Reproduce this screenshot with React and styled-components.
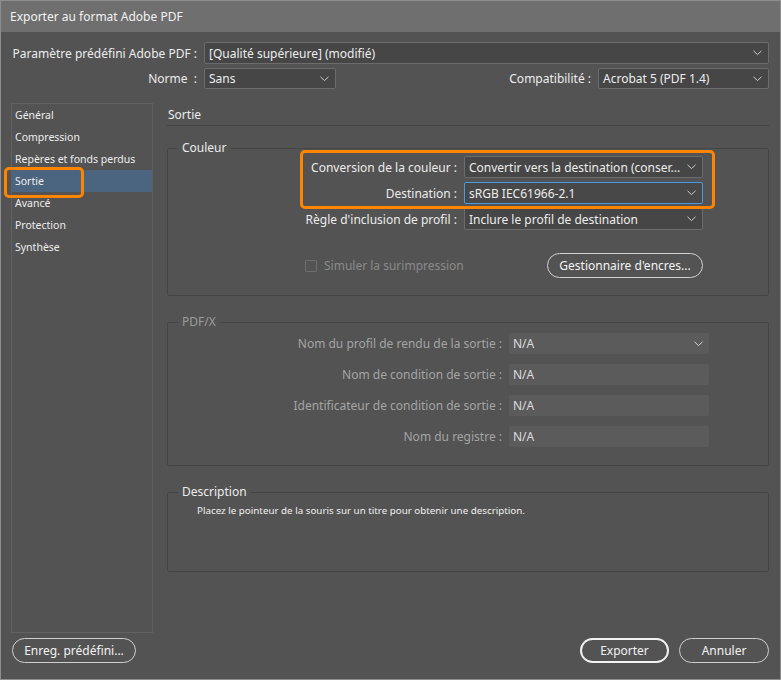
import React from "react";
import styled, { createGlobalStyle } from "styled-components";

const Global = createGlobalStyle`
  * { box-sizing: border-box; }
  html, body { margin: 0; padding: 0; background: #535353; }
  body { font-family: "Noto Sans", "Segoe UI", sans-serif; }
`;

const Window = styled.div`
  position: relative;
  width: 781px;
  height: 680px;
  border: 1px solid #8e8e8e;
  background: #535353;
  display: flex;
  flex-direction: column;
  color: #ececec;
  font-size: 12px;
  overflow: hidden;
`;

const TitleBar = styled.div`
  height: 31px;
  flex: none;
  background: #6f6f6f;
  padding-left: 9px;
  display: flex;
  align-items: center;
  font-size: 12px;
  color: #f2f2f2;
`;

const Body = styled.div`
  flex: 1;
  display: flex;
  flex-direction: column;
  padding: 10px 11px 0 10px;
`;

const Header = styled.div`
  display: flex;
  flex-direction: column;
  gap: 4px;
`;

const HeaderRow = styled.div`
  display: flex;
  align-items: center;
  gap: 7px;
  height: ${(p) => p.$h || 22}px;
`;

const HeaderLabel = styled.div`
  width: ${(p) => (p.$w ? p.$w + "px" : "auto")};
  flex: none;
  text-align: right;
  white-space: nowrap;
  margin-left: ${(p) => (p.$auto ? "auto" : "0")};
`;

const SelectBox = styled.div`
  position: relative;
  height: ${(p) => p.$h || 21}px;
  width: ${(p) => (p.$w ? p.$w + "px" : "auto")};
  flex: ${(p) => (p.$w ? "none" : "1")};
  background: ${(p) => (p.$focus ? "#484848" : "#464646")};
  border: 1px solid ${(p) => (p.$focus ? "#4a9ae6" : "#6c6c6c")};
  border-radius: 2px;
  display: flex;
  align-items: center;
  padding: 0 20px 0 4px;
  color: #ededed;
  white-space: nowrap;
  overflow: hidden;
`;

const Chevron = styled.svg`
  position: absolute;
  right: 6px;
  top: 50%;
  margin-top: -3px;
`;

const ChevronIcon = () => (
  <Chevron width="9" height="6" viewBox="0 0 9 6">
    <polyline points="0.5,0.8 4.5,4.6 8.5,0.8" fill="none" stroke="#cfcfcf" strokeWidth="1" />
  </Chevron>
);

const Select = ({ children, ...rest }) => (
  <SelectBox {...rest}>
    {children}
    <ChevronIcon />
  </SelectBox>
);

const Main = styled.div`
  margin-top: 14px;
  display: flex;
  gap: 14px;
  height: 530px;
`;

const Sidebar = styled.div`
  width: 142px;
  flex: none;
  border: 1px solid #626262;
  border-right-color: #5e5e5e;
  padding-top: 0;
`;

const NavItem = styled.div`
  height: 22px;
  display: flex;
  align-items: center;
  padding-left: 3px;
  font-size: 10.5px;
  color: #ededed;
  background: ${(p) => (p.$active ? "#4b6480" : "transparent")};
`;

const Panel = styled.div`
  flex: 1;
  display: flex;
  flex-direction: column;
`;

const PanelTitle = styled.div`
  height: 23px;
  padding-top: 3px;
  line-height: 18px;
  padding-left: 1px;
  border-bottom: 1px solid #434343;
  font-size: 12px;
`;

const Group = styled.fieldset`
  margin: ${(p) => p.$mt}px 0 0 0;
  padding: ${(p) => p.$pt || 0}px 0 ${(p) => p.$pb || 0}px 0;
  border: 1px solid #454545;
  border-radius: 2px;
  min-width: 0;
  height: ${(p) => (p.$h ? p.$h + "px" : "auto")};
`;

const Legend = styled.legend`
  margin-left: 10px;
  padding: 0 4px;
  line-height: 14px;
  font-size: 12px;
  color: ${(p) => (p.$disabled ? "#9c9c9c" : "#ececec")};
`;

const FormGrid = styled.div`
  display: grid;
  grid-template-columns: ${(p) => p.$label}px ${(p) => p.$field}px;
  column-gap: 7px;
  row-gap: ${(p) => p.$gap}px;
  align-items: center;
`;

const FieldLabel = styled.div`
  text-align: right;
  white-space: nowrap;
  color: ${(p) => (p.$disabled ? "#a4a4a4" : "#ececec")};
`;

const DisabledField = styled.div`
  position: relative;
  height: 21px;
  background: #5b5b5b;
  border-radius: 2px;
  display: flex;
  align-items: center;
  padding-left: 4px;
  color: #dcdcdc;
`;

const OptionsRow = styled.div`
  width: 535px;
  margin-top: 23px;
  height: 25px;
  display: flex;
  align-items: center;
  padding-left: 137px;
`;

const CheckBox = styled.span`
  width: 12px;
  height: 12px;
  border: 1px solid #6e6e6e;
  border-radius: 1px;
  flex: none;
`;

const CheckLabel = styled.span`
  margin-left: 7px;
  color: #8a8a8a;
`;

const PillButton = styled.div`
  height: 25px;
  width: ${(p) => p.$w}px;
  margin-left: ${(p) => (p.$auto ? "auto" : "0")};
  border: ${(p) => (p.$primary ? "2px solid #f2f2f2" : "1px solid #cfcfcf")};
  border-radius: 13px;
  display: flex;
  align-items: center;
  justify-content: center;
  color: #f2f2f2;
  font-size: 12px;
  white-space: nowrap;
  flex: none;
`;

const DescText = styled.div`
  padding-left: 29px;
  padding-top: 5px;
  font-size: 9.8px;
  line-height: 14px;
  color: #f0f0f0;
`;

const Footer = styled.div`
  margin-top: 5px;
  display: flex;
  align-items: center;
  gap: 10px;
  padding-left: 1px;
`;

const Highlight = styled.div`
  position: absolute;
  left: ${(p) => p.$x}px;
  top: ${(p) => p.$y}px;
  width: ${(p) => p.$w}px;
  height: ${(p) => p.$h}px;
  border: 3px solid #ff8500;
  border-radius: 5px;
  pointer-events: none;
`;

const navItems = [
  "Général",
  "Compression",
  "Repères et fonds perdus",
  "Sortie",
  "Avancé",
  "Protection",
  "Synthèse",
];

const pdfxRows = [
  ["Nom du profil de rendu de la sortie :", true],
  ["Nom de condition de sortie :", false],
  ["Identificateur de condition de sortie :", false],
  ["Nom du registre :", false],
];

export default function App() {
  return (
    <>
      <Global />
      <Window>
        <TitleBar>Exporter au format Adobe PDF</TitleBar>
        <Body>
          <Header>
            <HeaderRow>
              <HeaderLabel $w={186}>Paramètre prédéfini Adobe PDF :</HeaderLabel>
              <Select $h={22}>[Qualité supérieure] (modifié)</Select>
            </HeaderRow>
            <HeaderRow $h={21}>
              <HeaderLabel $w={186}>Norme&nbsp; :</HeaderLabel>
              <Select $w={132}>Sans</Select>
              <HeaderLabel $auto>Compatibilité :</HeaderLabel>
              <Select $w={171}>Acrobat 5 (PDF 1.4)</Select>
            </HeaderRow>
          </Header>

          <Main>
            <Sidebar>
              {navItems.map((n) => (
                <NavItem key={n} $active={n === "Sortie"}>
                  {n}
                </NavItem>
              ))}
            </Sidebar>
            <Panel>
              <PanelTitle>Sortie</PanelTitle>

              <Group $mt={15} $pt={1} $pb={17}>
                <Legend>Couleur</Legend>
                <FormGrid $label={289} $field={239} $gap={4}>
                  <FieldLabel>Conversion de la couleur :</FieldLabel>
                  <Select $h={22}>Convertir vers la destination (conser...</Select>
                  <FieldLabel>Destination :</FieldLabel>
                  <Select $h={22} $focus>sRGB IEC61966-2.1</Select>
                  <FieldLabel>Règle d'inclusion de profil :</FieldLabel>
                  <Select $h={22}>Inclure le profil de destination</Select>
                </FormGrid>
                <OptionsRow>
                  <CheckBox />
                  <CheckLabel>Simuler la surimpression</CheckLabel>
                  <PillButton $w={156} $auto>
                    Gestionnaire d'encres...
                  </PillButton>
                </OptionsRow>
              </Group>

              <Group $mt={19} $pt={4} $pb={18}>
                <Legend $disabled>PDF/X</Legend>
                <FormGrid $label={334} $field={200} $gap={10}>
                  {pdfxRows.map(([label, dd]) => (
                    <React.Fragment key={label}>
                      <FieldLabel $disabled>{label}</FieldLabel>
                      <DisabledField>
                        N/A
                        {dd && <ChevronIcon />}
                      </DisabledField>
                    </React.Fragment>
                  ))}
                </FormGrid>
              </Group>

              <Group $mt={19} $h={87}>
                <Legend>Description</Legend>
                <DescText>
                  Placez le pointeur de la souris sur un titre pour obtenir une description.
                </DescText>
              </Group>
            </Panel>
          </Main>

          <Footer>
            <PillButton $w={124}>Enreg. prédéfini...</PillButton>
            <PillButton $w={89} $auto $primary>
              Exporter
            </PillButton>
            <PillButton $w={90}>Annuler</PillButton>
          </Footer>
        </Body>

        <Highlight $x={3} $y={166} $w={80} $h={31} />
        <Highlight $x={299} $y={149} $w={415} $h={59} />
      </Window>
    </>
  );
}
